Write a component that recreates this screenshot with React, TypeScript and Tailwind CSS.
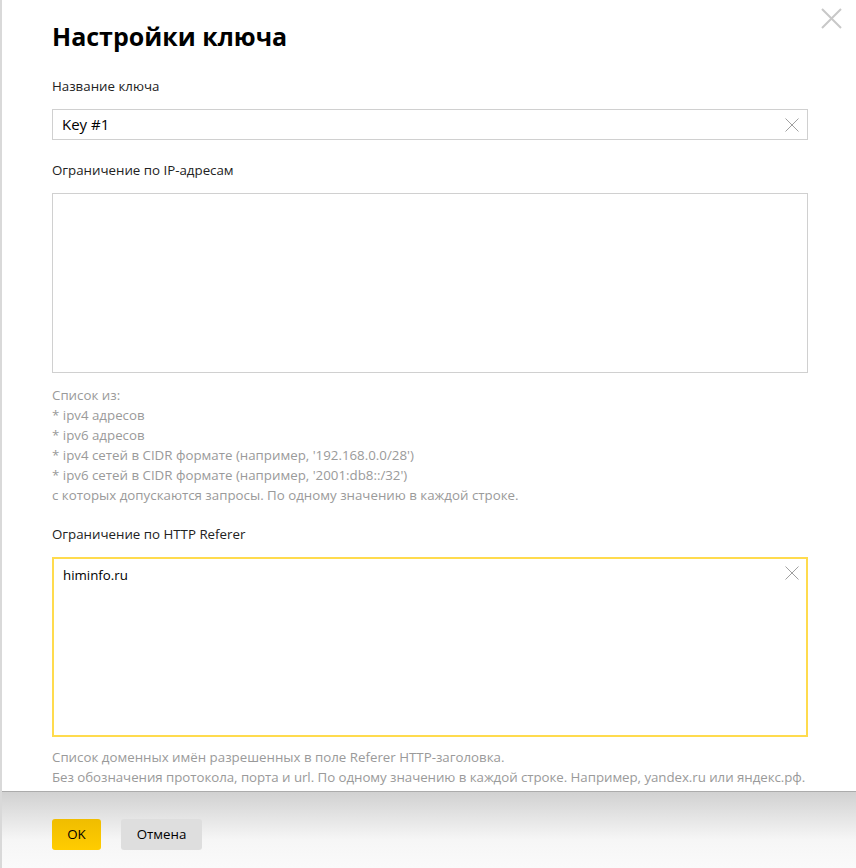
import React, { useState } from 'react';

const font = { fontFamily: '"Open Sans", "Liberation Sans", sans-serif' };

const ClearIcon: React.FC<{ size?: number; className?: string }> = ({ size = 14, className }) => (
  <svg width={size} height={size} viewBox="0 0 14 14" className={className}>
    <path d="M0.5 0.5L13.5 13.5M13.5 0.5L0.5 13.5" stroke="currentColor" strokeWidth="1" fill="none" />
  </svg>
);

export default function App() {
  const [name, setName] = useState('Key #1');
  const [ips, setIps] = useState('');
  const [referers, setReferers] = useState('himinfo.ru');

  return (
    <div className="flex h-[868px] w-[856px] overflow-hidden bg-white" style={font}>
      {/* edge of the page behind the dialog */}
      <div className="w-[2px] shrink-0 bg-[#d9d9d9]" />

      <div className="relative flex min-w-0 flex-1 flex-col">
        <button className="absolute right-[14px] top-[8px] text-[#c8c8c8]" aria-label="Закрыть">
          <svg width="21" height="21" viewBox="0 0 21 21">
            <path d="M1 1L20 20M20 1L1 20" stroke="currentColor" strokeWidth="2" fill="none" />
          </svg>
        </button>

        <div className="h-[791px] shrink-0 overflow-hidden pl-[50px] pr-[48px]">
          <h1 className="pt-[17px] text-[25px] font-bold leading-[38px] text-black">Настройки ключа</h1>

          <div className="mt-[22px] text-[13.3px] leading-[18px] text-[#222]">Название ключа</div>
          <div className="mt-[14px] flex h-[31px] items-center border border-[#d0d0d0] pl-[9px] pr-[8px]">
            <input
              value={name}
              onChange={(e) => setName(e.target.value)}
              className="min-w-0 flex-1 bg-transparent text-[15px] text-black outline-none"
            />
            <ClearIcon className="text-[#a0a0a0]" />
          </div>

          <div className="mt-[21px] text-[13.3px] leading-[18px] text-[#222]">Ограничение по IP-адресам</div>
          <textarea
            value={ips}
            onChange={(e) => setIps(e.target.value)}
            className="mt-[14px] block h-[180px] w-full resize-none border border-[#d0d0d0] px-[10px] py-[8px] text-[13px] outline-none"
          />

          <div className="mt-[12px] text-[13.3px] leading-[20px] text-[#9a9a9a]">
            <div>Список из:</div>
            <div>* ipv4 адресов</div>
            <div>* ipv6 адресов</div>
            <div>* ipv4 сетей в CIDR формате (например, '192.168.0.0/28')</div>
            <div>* ipv6 сетей в CIDR формате (например, '2001:db8::/32')</div>
            <div>с которых допускаются запросы. По одному значению в каждой строке.</div>
          </div>

          <div className="mt-[20px] text-[13.3px] leading-[18px] text-[#222]">Ограничение по HTTP Referer</div>
          <div className="mt-[14px] flex h-[180px] items-start border-2 border-[#ffdb4d] pr-[7px] pt-[7px]">
            <textarea
              value={referers}
              onChange={(e) => setReferers(e.target.value)}
              className="block h-full min-w-0 flex-1 resize-none bg-transparent pl-[9px] text-[13.3px] leading-[18px] text-black outline-none"
            />
            <ClearIcon className="shrink-0 text-[#a0a0a0]" />
          </div>

          <div className="mt-[10px] whitespace-nowrap text-[13.3px] leading-[20px] text-[#9a9a9a]">
            <div>Список доменных имён разрешенных в поле Referer HTTP-заголовка.</div>
            <div className="tracking-[-0.05px]">
              Без обозначения протокола, порта и url. По одному значению в каждой строке. Например, yandex.ru или яндекс.рф.
            </div>
          </div>
        </div>

        <div className="flex flex-1 items-start gap-[20px] border-t border-[#ababab] bg-[linear-gradient(to_bottom,#d1d1d1,#f6f6f6_48px,#fafafa)] pl-[50px] pt-[27px]">
          <button className="h-[31px] w-[49px] rounded-[3px] bg-[linear-gradient(to_bottom,#f0bd00,#ffcc00)] text-[13.3px] text-black">
            OK
          </button>
          <button className="h-[31px] w-[81px] rounded-[3px] bg-[#dedede] text-[13.3px] text-black">
            Отмена
          </button>
        </div>
      </div>
    </div>
  );
}
